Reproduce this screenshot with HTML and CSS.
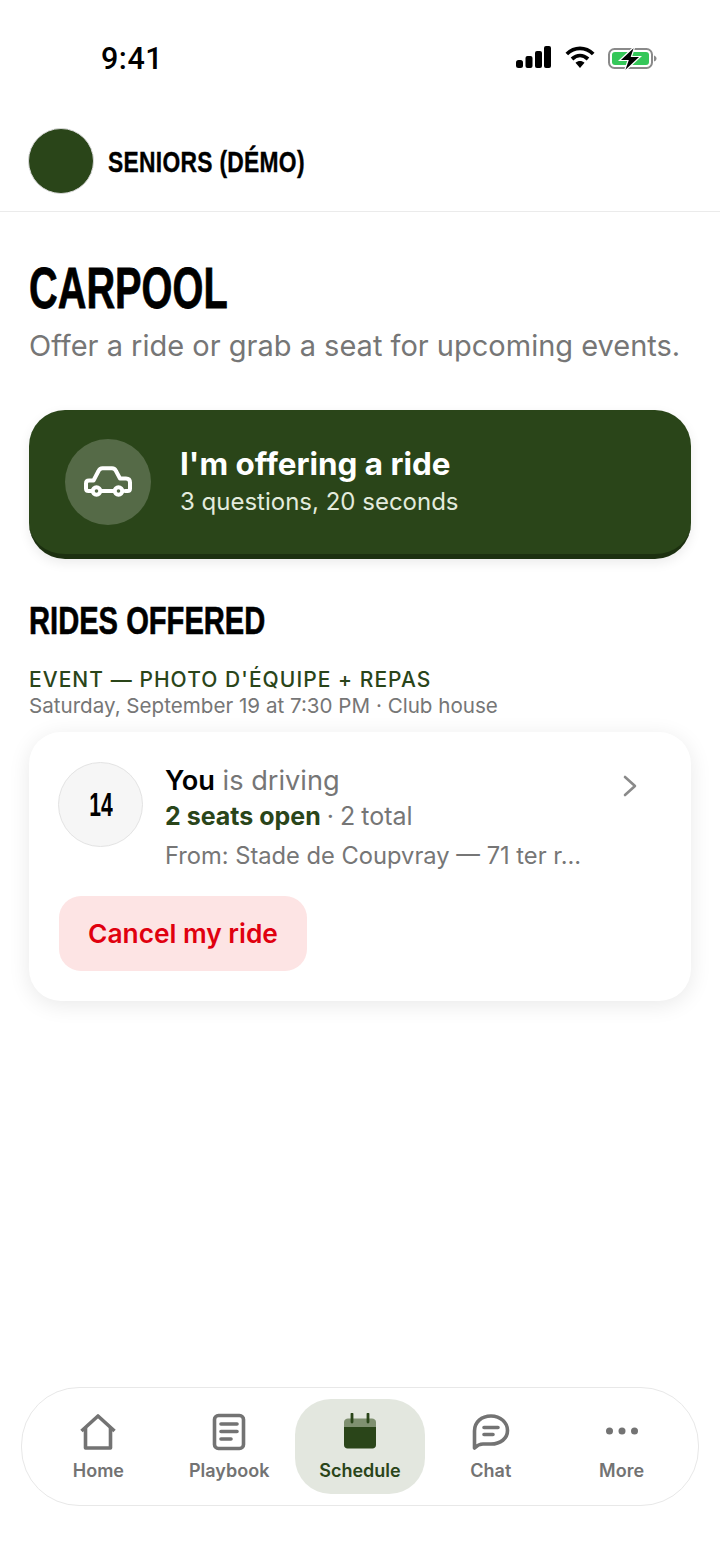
FILE: index.html
```html
<!DOCTYPE html>
<html lang="en">
<head>
<meta charset="utf-8">
<title>Carpool</title>
<link rel="stylesheet" href="styles.css">
</head>
<body>
<div class="screen">
  <div class="status">
    <span class="time">9:41</span>
    <div class="status-icons">
      <svg class="signal" width="35" height="22" viewBox="0 0 35 22"><rect x="0" y="14" width="7" height="8" rx="2.500"/><rect x="9.500" y="10" width="7" height="12" rx="2"/><rect x="19" y="5" width="7" height="17" rx="2"/><rect x="28" y="0" width="7" height="22" rx="2"/></svg>
      <svg width="30" height="22" viewBox="0 0 30 22"><path d="M1.800 8C9.500 .6 20.500 .6 28.200 8" fill="none" stroke="#000" stroke-width="3.800"/><path d="M7 13C12 8.400 18 8.400 23 13" fill="none" stroke="#000" stroke-width="3.800"/><path d="M10.500 16.800C13 14.400 17 14.400 19.500 16.800L15 22Z"/></svg>
      <svg width="49" height="26" viewBox="0 0 49 26"><rect x="1" y="3" width="43" height="19" rx="5.500" fill="#fff" stroke="#8a8a8a" stroke-width="2"/><rect x="4" y="6" width="37" height="13" rx="3" fill="#35c759"/><path d="M46 9.500C47.500 10 48.500 11 48.500 12.500S47.500 15 46 15.500Z" fill="#8a8a8a"/><path d="M27 0L11.500 14.500H20L16 26L32.500 10.500H23.500Z" stroke="#fff" stroke-width="1.200"/></svg>
    </div>
  </div>
  <header class="team">
    <div class="team-logo"></div>
    <span class="team-name">SENIORS (DÉMO)</span>
  </header>
  <main class="content">
    <h1 class="title">CARPOOL</h1>
    <p class="subtitle">Offer a ride or grab a seat for upcoming events.</p>
    <div class="offer">
      <div class="offer-icon">
        <svg width="48" height="32" viewBox="0 0 48 32" fill="none" stroke="#fff" stroke-width="4" stroke-linejoin="round" stroke-linecap="round"><path d="M7 25H4.500C2.800 25 2 24 2 22.500V17.500C2 15.500 3 14.500 5 14.500H9.500L14.500 5C15.300 3.200 16.500 2.200 18.500 2.200H28C30 2.200 31.200 3 32 5L36 12.500H42C44.500 12.500 46 14 46 16.500V22.500C46 24.200 45 25 43.500 25H41"/><path d="M18 25H30"/><circle cx="12.500" cy="25" r="3.800"/><circle cx="34.500" cy="25" r="3.800"/></svg>
      </div>
      <div class="offer-text">
        <div class="offer-title">I'm offering a ride</div>
        <div class="offer-sub">3 questions, 20 seconds</div>
      </div>
    </div>
    <h2 class="section">RIDES OFFERED</h2>
    <div class="event-name">EVENT — PHOTO D'ÉQUIPE + REPAS</div>
    <div class="event-meta">Saturday, September 19 at 7:30 PM · Club house</div>
    <div class="card">
      <div class="card-top">
        <div class="jersey"><span class="jersey-num">14</span></div>
        <div class="card-info">
          <div class="driver"><b>You</b> is driving</div>
          <div class="seats"><b>2 seats open</b> · 2 total</div>
          <div class="from">From: Stade de Coupvray — 71 ter r...</div>
        </div>
        <svg class="chev" width="16" height="24" viewBox="0 0 16 24" fill="none" stroke="#8a8a8a" stroke-width="2.600" stroke-linecap="round" stroke-linejoin="round"><path d="M3 3L13 12L3 21"/></svg>
      </div>
      <div class="cancel">Cancel my ride</div>
    </div>
  </main>
  <nav class="tabs">
    <div class="tab">
      <svg width="40" height="38" viewBox="0 0 40 38" fill="none" stroke="#737373" stroke-width="3.600" stroke-linejoin="round"><path d="M3.500 18L20 3L36.500 18"/><path d="M7.500 15V35H32.500V15"/></svg>
      <span>Home</span>
    </div>
    <div class="tab">
      <svg width="34" height="38" viewBox="0 0 34 38" fill="none" stroke="#737373" stroke-width="3.600" stroke-linecap="round"><rect x="2.500" y="2.500" width="29" height="33" rx="4"/><path d="M9 11H25M9 18.500H25M9 26H19"/></svg>
      <span>Playbook</span>
    </div>
    <div class="tab active">
      <svg width="34" height="38" viewBox="0 0 34 38"><path d="M1 9C1 7 3 5.500 5 5.500H29C31 5.500 33 7 33 9V14H1Z" fill="#7f9070"/><path d="M1 14H33V32C33 34 31.500 35.500 29.500 35.500H4.500C2.500 35.500 1 34 1 32Z" fill="#2a4519"/><path d="M9 1V9M25 1V9" stroke="#2a4519" stroke-width="2.800" stroke-linecap="round"/></svg>
      <span>Schedule</span>
    </div>
    <div class="tab">
      <svg width="38" height="38" viewBox="0 0 38 38" fill="none" stroke="#737373" stroke-width="3.600" stroke-linecap="round" stroke-linejoin="round"><path d="M2.500 35V18C2.500 9 9.500 3 19 3S35.500 9.500 35.500 17.500S28.500 31 19 31H11C7.500 31 5 32.500 2.500 35Z"/><path d="M12 14.500H26M12 21.500H21"/></svg>
      <span>Chat</span>
    </div>
    <div class="tab">
      <svg width="36" height="38" viewBox="0 0 36 38" fill="#737373"><circle cx="5.500" cy="18" r="3.500"/><circle cx="18" cy="18" r="3.500"/><circle cx="30.500" cy="18" r="3.500"/></svg>
      <span>More</span>
    </div>
  </nav>
</div>
</body>
</html>
```
FILE: styles.css
```css
* { box-sizing: border-box; margin: 0; padding: 0; }
html, body { background: #fff; }
body { font-family: Inter, "Liberation Sans", sans-serif; color: #000; }
.screen { width: 720px; height: 1566px; display: flex; flex-direction: column; overflow: hidden; }

.status { height: 128px; flex: none; display: flex; justify-content: space-between; align-items: flex-start; padding: 40px 63px 0 101px; }
.time { font-size: 30.500px; font-weight: 500; line-height: 38px; font-family: Roboto, sans-serif; letter-spacing: .5px; }
.status-icons { display: flex; align-items: flex-start; gap: 13px; padding-top: 6px; }
.signal { margin-right: 1px; }

.team { height: 84px; flex: none; display: flex; align-items: flex-start; gap: 14px; padding: 0 28px; border-bottom: 1px solid #ebebeb; }
.team-logo { width: 66px; height: 66px; border-radius: 50%; background: #2a4519; border: 1.500px solid #d9d9d9; }
.team-name, .title, .section, .jersey-num { display: inline-block; font-family: "Liberation Sans", sans-serif; font-weight: 700; transform-origin: left center; white-space: nowrap; -webkit-text-stroke: .4px currentColor; }
.team-name { font-size: 30px; line-height: 68px; letter-spacing: .4px; transform: scaleX(.76); }

.content { flex: 1; padding: 44px 29px 0; }
.title { display: block; font-size: 58px; line-height: 64px; transform: scaleX(.685); -webkit-text-stroke: .8px currentColor; }
.subtitle { font-size: 29px; line-height: 38px; color: #767676; margin-top: 7px; white-space: nowrap; }

.offer { margin-top: 45px; height: 149px; border-radius: 36px; background: #2a4519; border-bottom: 5px solid #1c3010; box-shadow: 0 4px 12px rgba(0,0,0,.08); display: flex; align-items: flex-start; padding: 29px 36px 0; gap: 29px; }
.offer-icon { width: 86px; height: 86px; border-radius: 50%; background: #556a47; display: flex; align-items: center; justify-content: center; }
.offer-title { font-size: 31.400px; font-weight: 700; color: #fff; line-height: 38px; margin-top: 6px; }
.offer-sub { font-size: 24px; color: #e3ebdd; line-height: 32px; margin-top: 3px; }

.section { display: block; font-size: 39px; line-height: 46px; margin-top: 39px; transform: scaleX(.747); -webkit-text-stroke: .6px currentColor; }
.event-name { font-size: 21px; font-weight: 500; color: #2a4519; letter-spacing: 1.050px; line-height: 26px; margin-top: 23px; }
.event-meta { font-size: 20.600px; color: #767676; line-height: 26px; margin-top: 0; }

.card { margin-top: 13px; height: 269px; border-radius: 32px; background: #fff; box-shadow: 0 4px 22px rgba(0,0,0,.09); padding: 30px 29px 0 29px; }
.card-top { display: flex; align-items: flex-start; }
.jersey { width: 85px; height: 85px; flex: none; border-radius: 50%; background: #f6f6f6; border: 1.500px solid #e3e3e3; display: flex; align-items: center; justify-content: center; }
.jersey-num { font-size: 34px; transform: scaleX(.62); transform-origin: center; -webkit-text-stroke: 0; }
.card-info { flex: 1; padding: 2px 0 0 22px; min-width: 0; }
.driver { font-size: 27.200px; line-height: 34px; color: #767676; }
.driver b { color: #000; font-weight: 600; }
.seats { font-size: 25px; line-height: 34px; color: #767676; margin-top: 1px; word-spacing: -1px; }
.seats b { color: #2a4519; font-weight: 700; word-spacing: 0; }
.from { font-size: 23.700px; line-height: 32px; color: #767676; margin-top: 7px; white-space: nowrap; }
.chev { flex: none; margin: 12px 24px 0 0; }
.cancel { margin: 24px 0 0 1px; width: 248px; height: 75px; border-radius: 22px; background: #fde4e4; color: #e0000f; font-size: 26.300px; font-weight: 600; display: flex; align-items: center; justify-content: center; }

.tabs { flex: none; height: 119px; margin: 0 21px 60px; border: 1.500px solid #e8e8e8; border-radius: 58px; display: flex; align-items: flex-start; padding: 10.500px 11px 0; }
.tab { flex: 1; height: 95px; display: flex; flex-direction: column; align-items: center; padding-top: 14px; gap: 8px; border-radius: 36px; color: #737373; font-size: 18px; font-weight: 600; }
.tab span { line-height: 24px; }
.tab.active { background: #e3e7df; color: #2a4519; }
```
